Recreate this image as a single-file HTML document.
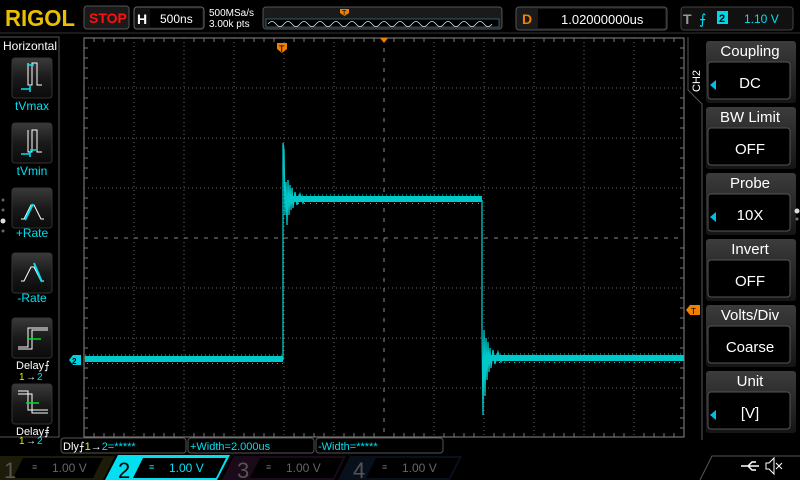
<!DOCTYPE html>
<html><head><meta charset="utf-8"><style>
body{margin:0;background:#000;width:800px;height:480px;overflow:hidden;font-family:"Liberation Sans",sans-serif}
svg{display:block}
text{font-family:"Liberation Sans",sans-serif}
</style></head><body>
<svg width="800" height="480" viewBox="0 0 800 480" xmlns="http://www.w3.org/2000/svg">
<defs>
<linearGradient id="btn" x1="0" y1="0" x2="0" y2="1"><stop offset="0" stop-color="#3a3a3a"/><stop offset="0.5" stop-color="#1a1a1a"/><stop offset="1" stop-color="#0a0a0a"/></linearGradient>
<linearGradient id="mt" x1="0" y1="0" x2="0" y2="1"><stop offset="0" stop-color="#3c3c3c"/><stop offset="1" stop-color="#151515"/></linearGradient>
</defs>
<!-- top bar -->
<text x="5" y="26" font-family="Liberation Serif" font-weight="bold" font-size="23" fill="#e8c000" textLength="70" lengthAdjust="spacingAndGlyphs">RIGOL</text>
<rect x="84" y="6" width="45" height="23" rx="3" fill="#1a1a1a" stroke="#555"/>
<text x="89" y="23" font-weight="bold" font-size="14" fill="#ff1010">STOP</text>
<rect x="134" y="7" width="70" height="22" rx="3" fill="#111" stroke="#666"/>
<rect x="150" y="9" width="52" height="18" fill="#000"/>
<text x="137" y="24" font-weight="bold" font-size="14" fill="#fff">H</text>
<text x="160" y="23" font-size="12" fill="#fff">500ns</text>
<text x="209" y="16" font-size="10" fill="#fff">500MSa/s</text>
<text x="209" y="27" font-size="10" fill="#fff">3.00k pts</text>
<rect x="263" y="7" width="239" height="22" rx="3" fill="#1a1a1a" stroke="#555"/>
<rect x="266" y="19" width="233" height="8" fill="#000" stroke="#4a90b0" stroke-width="0.6"/>
<path d="M268 24 q4 -5 8 0 t8 0 t8 0 t8 0 t8 0 t8 0 t8 0 t8 0 t8 0 t8 0 t8 0 t8 0 t8 0 t8 0 t8 0 t8 0 t8 0 t8 0 t8 0 t8 0 t8 0 t8 0 t8 0 t8 0 t8 0 t8 0 t8 0 t8 0" fill="none" stroke="#ddd" stroke-width="0.8"/>
<path d="M340 9 h9 v4 l-4.5 3 l-4.5 -3z" fill="#f08000"/><text x="342" y="15" font-size="7" fill="#000">T</text>
<rect x="516" y="7" width="151" height="23" rx="3" fill="#1a1a1a" stroke="#555"/>
<rect x="538" y="9" width="127" height="19" fill="#000"/>
<text x="522" y="24" font-weight="bold" font-size="14" fill="#f08000">D</text>
<text x="561" y="24" font-size="13" fill="#fff">1.02000000us</text>
<rect x="681" y="7" width="112" height="23" rx="3" fill="#111" stroke="#444"/>
<text x="683" y="24" font-weight="bold" font-size="14" fill="#999">T</text>
<text x="699" y="24" font-size="14" fill="#00e0f0">⨍</text>
<rect x="717" y="11" width="11" height="13" fill="#00d8e8"/><text x="719" y="22" font-size="11" font-weight="bold" fill="#000">2</text>
<text x="744" y="23" font-size="12" fill="#00e0f0">1.10 V</text>
<line x1="0" y1="33" x2="800" y2="33" stroke="#333"/>
<!-- grid -->
<rect x="84" y="38" width="600" height="399" fill="#000" stroke="#888" stroke-width="1"/>
<g stroke="#666" stroke-dasharray="1 3" stroke-width="1">
<line x1="134" y1="38" x2="134" y2="437"/><line x1="184" y1="38" x2="184" y2="437"/><line x1="234" y1="38" x2="234" y2="437"/><line x1="284" y1="38" x2="284" y2="437"/><line x1="334" y1="38" x2="334" y2="437"/><line x1="434" y1="38" x2="434" y2="437"/><line x1="484" y1="38" x2="484" y2="437"/><line x1="534" y1="38" x2="534" y2="437"/><line x1="584" y1="38" x2="584" y2="437"/><line x1="634" y1="38" x2="634" y2="437"/>
<line x1="84" y1="88" x2="684" y2="88"/><line x1="84" y1="138" x2="684" y2="138"/><line x1="84" y1="188" x2="684" y2="188"/><line x1="84" y1="288" x2="684" y2="288"/><line x1="84" y1="338" x2="684" y2="338"/><line x1="84" y1="388" x2="684" y2="388"/>
</g>
<g stroke="#888" stroke-width="1">
<line x1="384" y1="38" x2="384" y2="437" stroke-dasharray="4 6"/>
<line x1="84" y1="238" x2="684" y2="238" stroke-dasharray="4 6"/>
</g>
<g stroke="#777" stroke-width="1">
<path d="M94 38v4M104 38v4M114 38v4M124 38v4M144 38v4M154 38v4M164 38v4M174 38v4M194 38v4M204 38v4M214 38v4M224 38v4M244 38v4M254 38v4M264 38v4M274 38v4M294 38v4M304 38v4M314 38v4M324 38v4M344 38v4M354 38v4M364 38v4M374 38v4M394 38v4M404 38v4M414 38v4M424 38v4M444 38v4M454 38v4M464 38v4M474 38v4M494 38v4M504 38v4M514 38v4M524 38v4M544 38v4M554 38v4M564 38v4M574 38v4M594 38v4M604 38v4M614 38v4M624 38v4M644 38v4M654 38v4M664 38v4M674 38v4"/>
<path d="M94 437v-4M104 437v-4M114 437v-4M124 437v-4M144 437v-4M154 437v-4M164 437v-4M174 437v-4M194 437v-4M204 437v-4M214 437v-4M224 437v-4M244 437v-4M254 437v-4M264 437v-4M274 437v-4M294 437v-4M304 437v-4M314 437v-4M324 437v-4M344 437v-4M354 437v-4M364 437v-4M374 437v-4M394 437v-4M404 437v-4M414 437v-4M424 437v-4M444 437v-4M454 437v-4M464 437v-4M474 437v-4M494 437v-4M504 437v-4M514 437v-4M524 437v-4M544 437v-4M554 437v-4M564 437v-4M574 437v-4M594 437v-4M604 437v-4M614 437v-4M624 437v-4M644 437v-4M654 437v-4M664 437v-4M674 437v-4"/>
<path d="M84 48h4M84 58h4M84 68h4M84 78h4M84 98h4M84 108h4M84 118h4M84 128h4M84 148h4M84 158h4M84 168h4M84 178h4M84 198h4M84 208h4M84 218h4M84 228h4M84 248h4M84 258h4M84 268h4M84 278h4M84 298h4M84 308h4M84 318h4M84 328h4M84 348h4M84 358h4M84 368h4M84 378h4M84 398h4M84 408h4M84 418h4M84 428h4"/>
<path d="M684 48h-4M684 58h-4M684 68h-4M684 78h-4M684 98h-4M684 108h-4M684 118h-4M684 128h-4M684 148h-4M684 158h-4M684 168h-4M684 178h-4M684 198h-4M684 208h-4M684 218h-4M684 228h-4M684 248h-4M684 258h-4M684 268h-4M684 278h-4M684 298h-4M684 308h-4M684 318h-4M684 328h-4M684 348h-4M684 358h-4M684 368h-4M684 378h-4M684 398h-4M684 408h-4M684 418h-4M684 428h-4"/>
</g>
<!-- waveform -->
<g fill="#00c8c8">
<rect x="85" y="356" width="198" height="6"/>
<rect x="288" y="196" width="194" height="6"/>
<rect x="490" y="355" width="194" height="6"/>
</g>
<g stroke="#00c8c8" stroke-width="1" stroke-dasharray="1 3">
<line x1="85" y1="355" x2="283" y2="355"/><line x1="87" y1="363.5" x2="283" y2="363.5" stroke-dasharray="1 4"/>
<line x1="290" y1="195" x2="482" y2="195"/><line x1="292" y1="203.5" x2="482" y2="203.5" stroke-dasharray="1 5"/>
<line x1="492" y1="354" x2="684" y2="354"/><line x1="494" y1="362.5" x2="684" y2="362.5" stroke-dasharray="1 4"/>
</g>
<polyline fill="none" stroke="#00c8c8" stroke-width="1.3" points="283,360 283,143 284,150 285,215 286,182 287,225 288,180 289,215 290,185 291,210 292,188 293,208 295,192 297,205 300,194 303,203 306,196"/>
<polyline fill="none" stroke="#00c8c8" stroke-width="1.3" points="482,200 482,330 483,415 484,330 485,396 486,338 487,380 488,342 489,372 490,348 491,368 493,350 495,364 498,352 501,362 505,355"/>
<!-- markers -->
<path d="M277 43 h10 v6 l-5 4 l-5 -4z" fill="#f08000"/><text x="279" y="52" font-size="9" fill="#000">T</text>
<path d="M380 38 h8 l-4 5z" fill="#f08000"/>
<path d="M69 360 l4 -5 h8 v10 h-8z" fill="#00d0e0"/><text x="72" y="364" font-size="8" font-weight="bold" fill="#000">2</text>
<path d="M686 310 l4 -5 h10 v10 h-10z" fill="#f08000"/><text x="691" y="314" font-size="8" fill="#000">T</text>
<!-- left panel -->
<path d="M0 37 h59 v400 h-59" fill="none" stroke="#555"/>
<text x="3" y="50" font-size="12" fill="#fff">Horizontal</text>
<g>
<rect x="12" y="58" width="40" height="40" rx="3" fill="url(#btn)" stroke="#333"/>
<path d="M28 63 v22 h4 v-22 h5 v22 h5" fill="none" stroke="#fff" stroke-width="1"/><path d="M28 65h6 M21 89 h9 M30 86 v6" stroke="#00e0f0" stroke-width="1.5" fill="none"/>
<text x="32" y="110" font-size="12" fill="#00e0f0" text-anchor="middle">tVmax</text>
<rect x="12" y="123" width="40" height="40" rx="3" fill="url(#btn)" stroke="#333"/>
<path d="M28 130 v22 h4 v-22 h5 v22 h5" fill="none" stroke="#fff" stroke-width="1"/><path d="M30 150h6 M21 154 h9 M30 151 v6" stroke="#00e0f0" stroke-width="1.5" fill="none"/>
<text x="32" y="175" font-size="12" fill="#00e0f0" text-anchor="middle">tVmin</text>
<rect x="12" y="188" width="40" height="40" rx="3" fill="url(#btn)" stroke="#333"/>
<path d="M21 219 h3 l7 -14 h3 l7 14 h3" fill="none" stroke="#fff" stroke-width="1"/><path d="M25 220 l8 -16" stroke="#00e0f0" stroke-width="2"/>
<text x="32" y="237" font-size="12" fill="#00e0f0" text-anchor="middle">+Rate</text>
<rect x="12" y="253" width="40" height="40" rx="3" fill="url(#btn)" stroke="#333"/>
<path d="M21 281 h3 l7 -14 h3 l7 14 h3" fill="none" stroke="#fff" stroke-width="1"/><path d="M34 263 l8 19" stroke="#00e0f0" stroke-width="2"/>
<text x="32" y="302" font-size="12" fill="#00e0f0" text-anchor="middle">-Rate</text>
<rect x="12" y="318" width="40" height="40" rx="3" fill="url(#btn)" stroke="#333"/>
<path d="M18 347 h10 v-19 h20 M18 349 h14 v-19 h16" fill="none" stroke="#fff" stroke-width="1"/><path d="M28 339 h13" stroke="#00e020" stroke-width="1.5"/>
<text x="16" y="369" font-size="11" font-family="DejaVu Sans Mono" fill="#fff">Delay⨍</text>
<text x="19" y="380" font-size="10" fill="#f0f000">1</text><text x="26" y="380" font-size="10" fill="#fff">→</text><text x="37" y="380" font-size="10" fill="#00e0f0">2</text>
<rect x="12" y="384" width="40" height="40" rx="3" fill="url(#btn)" stroke="#333"/>
<path d="M18 391 h10 v19 h20 M18 394 h14 v19 h16" fill="none" stroke="#fff" stroke-width="1"/><path d="M26 403 h13" stroke="#00e020" stroke-width="1.5"/>
<text x="16" y="435" font-size="11" font-family="DejaVu Sans Mono" fill="#fff">Delay⨎</text>
<text x="19" y="444" font-size="10" fill="#f0f000">1</text><text x="26" y="444" font-size="10" fill="#fff">→</text><text x="37" y="444" font-size="10" fill="#00e0f0">2</text>
</g>
<circle cx="3" cy="200" r="1.5" fill="#666"/><circle cx="3" cy="210" r="1.5" fill="#666"/><circle cx="3" cy="221" r="2.5" fill="#ddd"/><circle cx="3" cy="231" r="1.5" fill="#666"/>
<!-- right panel -->
<path d="M688 37 v53 l14 14 v336" fill="none" stroke="#555"/>
<text x="0" y="0" font-size="11" fill="#fff" transform="translate(700,92) rotate(-90)">CH2</text>
<g font-size="15" fill="#fff" text-anchor="middle">
<g><rect x="706" y="41" width="90" height="62" rx="3" fill="url(#mt)"/><rect x="708" y="62" width="82" height="37" rx="3" fill="#000" stroke="#555"/><text x="750" y="56">Coupling</text><text x="750" y="88">DC</text><path d="M710 85 l6 -5 v10z" fill="#00c0e0"/></g>
<g transform="translate(0,66)"><rect x="706" y="41" width="90" height="62" rx="3" fill="url(#mt)"/><rect x="708" y="62" width="82" height="37" rx="3" fill="#000" stroke="#555"/><text x="750" y="56">BW Limit</text><text x="750" y="88">OFF</text></g>
<g transform="translate(0,132)"><rect x="706" y="41" width="90" height="62" rx="3" fill="url(#mt)"/><rect x="708" y="62" width="82" height="37" rx="3" fill="#000" stroke="#555"/><text x="750" y="56">Probe</text><text x="750" y="88">10X</text><path d="M710 85 l6 -5 v10z" fill="#00c0e0"/></g>
<g transform="translate(0,198)"><rect x="706" y="41" width="90" height="62" rx="3" fill="url(#mt)"/><rect x="708" y="62" width="82" height="37" rx="3" fill="#000" stroke="#555"/><text x="750" y="56">Invert</text><text x="750" y="88">OFF</text></g>
<g transform="translate(0,264)"><rect x="706" y="41" width="90" height="62" rx="3" fill="url(#mt)"/><rect x="708" y="62" width="82" height="37" rx="3" fill="#000" stroke="#555"/><text x="750" y="56">Volts/Div</text><text x="750" y="88">Coarse</text></g>
<g transform="translate(0,330)"><rect x="706" y="41" width="90" height="62" rx="3" fill="url(#mt)"/><rect x="708" y="62" width="82" height="37" rx="3" fill="#000" stroke="#555"/><text x="750" y="56">Unit</text><text x="750" y="88">[V]</text><path d="M710 85 l6 -5 v10z" fill="#00c0e0"/></g>
</g>
<circle cx="797" cy="211" r="2.5" fill="#ddd"/><circle cx="797" cy="219" r="1.5" fill="#777"/>
<!-- measurement bar -->
<g font-size="11">
<rect x="61" y="438" width="125" height="15" rx="3" fill="#000" stroke="#555"/>
<text x="63" y="450" fill="#fff">Dly⨍<tspan fill="#f0f000">1</tspan>→<tspan fill="#00e0f0">2=*****</tspan></text>
<rect x="188" y="438" width="126" height="15" rx="3" fill="#000" stroke="#555"/>
<text x="190" y="450" fill="#00e0f0">+Width=2.000us</text>
<rect x="316" y="438" width="127" height="15" rx="3" fill="#000" stroke="#555"/>
<text x="318" y="450" fill="#00e0f0">-Width=*****</text>
</g>
<!-- channel bar -->
<path d="M0 456 h115 l-12 24 h-103z" fill="#1c1c08"/>
<path d="M23 458 h80 l-10 20 h-80z" fill="#000"/>
<text x="4" y="478" font-size="22" fill="#555">1</text><text x="32" y="470" font-size="9" fill="#666">≡</text><text x="52" y="472" font-size="12" fill="#666">1.00 V</text>
<path d="M118 455 h112 l-13 25 h-112z" fill="#00e0f0"/>
<path d="M143 458 h83 l-10 20 h-83z" fill="#000"/>
<text x="118" y="478" font-size="22" fill="#000">2</text><text x="149" y="470" font-size="9" fill="#00e0f0">≡</text><text x="169" y="472" font-size="12" fill="#00e0f0">1.00 V</text>
<path d="M234 456 h112 l-12 24 h-112z" fill="#1a0a1a"/>
<path d="M260 458 h83 l-10 20 h-83z" fill="#000"/>
<text x="237" y="478" font-size="22" fill="#555">3</text><text x="266" y="470" font-size="9" fill="#666">≡</text><text x="286" y="472" font-size="12" fill="#666">1.00 V</text>
<path d="M350 456 h112 l-12 24 h-112z" fill="#08101c"/>
<path d="M376 458 h83 l-10 20 h-83z" fill="#000"/>
<text x="353" y="478" font-size="22" fill="#555">4</text><text x="382" y="470" font-size="9" fill="#666">≡</text><text x="402" y="472" font-size="12" fill="#666">1.00 V</text>
<path d="M700 480 l12 -24 h88" fill="none" stroke="#555"/>
<path d="M741 466 h18 M748 466 l4 -4 h4 M748 466 l4 4 h4" fill="none" stroke="#fff" stroke-width="1.5"/>
<path d="M766 463 h3 l5 -5 v16 l-5 -5 h-3z" fill="none" stroke="#fff"/><path d="M776 463 l6 6 M782 463 l-6 6" stroke="#fff"/>
</svg>
</body></html>
